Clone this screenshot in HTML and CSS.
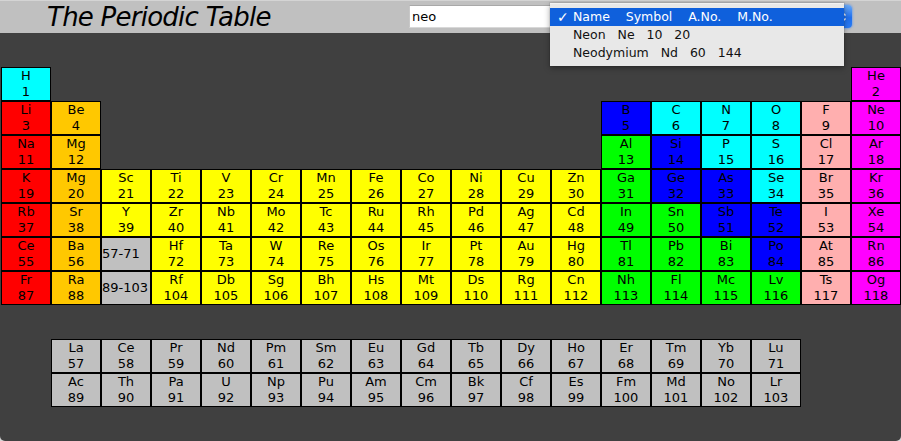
FILE: index.html
```html
<!DOCTYPE html>
<html lang="en">
<head>
<meta charset="utf-8">
<title>The Periodic Table</title>
<link rel="stylesheet" href="styles.css">
</head>
<body>
<div class="window">
  <header class="toolbar">
    <h1 class="title">The Periodic Table</h1>
    <div class="search">
      <div class="field">neo</div>
      <div class="combo">
        <span class="combo-btn">
          <svg width="8" height="12" viewBox="0 0 8 12"><path d="M1.5 4.5 L4 2 L6.5 4.5 M1.5 7.5 L4 10 L6.5 7.5" fill="none" stroke="#fff" stroke-width="1.4"/></svg>
        </span>
      </div>
    </div>
    <ul class="popup">
      <li class="opt selected"><span class="check">✓</span><span class="txt">Name    Symbol    A.No.    M.No.</span></li>
      <li class="opt"><span class="check"></span><span class="txt">Neon   Ne   10   20</span></li>
      <li class="opt"><span class="check"></span><span class="txt">Neodymium   Nd   60   144</span></li>
    </ul>
  </header>

  <main class="board">
    <div class="grid">
      <div class="el nm"><span>H</span><span>1</span></div>
      <div class="el ng col-18"><span>He</span><span>2</span></div>

      <div class="el alk"><span>Li</span><span>3</span></div>
      <div class="el ae"><span>Be</span><span>4</span></div>
      <div class="el met col-13"><span>B</span><span>5</span></div>
      <div class="el nm"><span>C</span><span>6</span></div>
      <div class="el nm"><span>N</span><span>7</span></div>
      <div class="el nm"><span>O</span><span>8</span></div>
      <div class="el hal"><span>F</span><span>9</span></div>
      <div class="el ng"><span>Ne</span><span>10</span></div>

      <div class="el alk"><span>Na</span><span>11</span></div>
      <div class="el ae"><span>Mg</span><span>12</span></div>
      <div class="el pm col-13"><span>Al</span><span>13</span></div>
      <div class="el met"><span>Si</span><span>14</span></div>
      <div class="el nm"><span>P</span><span>15</span></div>
      <div class="el nm"><span>S</span><span>16</span></div>
      <div class="el hal"><span>Cl</span><span>17</span></div>
      <div class="el ng"><span>Ar</span><span>18</span></div>

      <div class="el alk"><span>K</span><span>19</span></div>
      <div class="el ae"><span>Mg</span><span>20</span></div>
      <div class="el tm"><span>Sc</span><span>21</span></div>
      <div class="el tm"><span>Ti</span><span>22</span></div>
      <div class="el tm"><span>V</span><span>23</span></div>
      <div class="el tm"><span>Cr</span><span>24</span></div>
      <div class="el tm"><span>Mn</span><span>25</span></div>
      <div class="el tm"><span>Fe</span><span>26</span></div>
      <div class="el tm"><span>Co</span><span>27</span></div>
      <div class="el tm"><span>Ni</span><span>28</span></div>
      <div class="el tm"><span>Cu</span><span>29</span></div>
      <div class="el tm"><span>Zn</span><span>30</span></div>
      <div class="el pm"><span>Ga</span><span>31</span></div>
      <div class="el met"><span>Ge</span><span>32</span></div>
      <div class="el met"><span>As</span><span>33</span></div>
      <div class="el nm"><span>Se</span><span>34</span></div>
      <div class="el hal"><span>Br</span><span>35</span></div>
      <div class="el ng"><span>Kr</span><span>36</span></div>

      <div class="el alk"><span>Rb</span><span>37</span></div>
      <div class="el ae"><span>Sr</span><span>38</span></div>
      <div class="el tm"><span>Y</span><span>39</span></div>
      <div class="el tm"><span>Zr</span><span>40</span></div>
      <div class="el tm"><span>Nb</span><span>41</span></div>
      <div class="el tm"><span>Mo</span><span>42</span></div>
      <div class="el tm"><span>Tc</span><span>43</span></div>
      <div class="el tm"><span>Ru</span><span>44</span></div>
      <div class="el tm"><span>Rh</span><span>45</span></div>
      <div class="el tm"><span>Pd</span><span>46</span></div>
      <div class="el tm"><span>Ag</span><span>47</span></div>
      <div class="el tm"><span>Cd</span><span>48</span></div>
      <div class="el pm"><span>In</span><span>49</span></div>
      <div class="el pm"><span>Sn</span><span>50</span></div>
      <div class="el met"><span>Sb</span><span>51</span></div>
      <div class="el met"><span>Te</span><span>52</span></div>
      <div class="el hal"><span>I</span><span>53</span></div>
      <div class="el ng"><span>Xe</span><span>54</span></div>

      <div class="el alk"><span>Ce</span><span>55</span></div>
      <div class="el ae"><span>Ba</span><span>56</span></div>
      <div class="el ln range">57-71</div>
      <div class="el tm"><span>Hf</span><span>72</span></div>
      <div class="el tm"><span>Ta</span><span>73</span></div>
      <div class="el tm"><span>W</span><span>74</span></div>
      <div class="el tm"><span>Re</span><span>75</span></div>
      <div class="el tm"><span>Os</span><span>76</span></div>
      <div class="el tm"><span>Ir</span><span>77</span></div>
      <div class="el tm"><span>Pt</span><span>78</span></div>
      <div class="el tm"><span>Au</span><span>79</span></div>
      <div class="el tm"><span>Hg</span><span>80</span></div>
      <div class="el pm"><span>Tl</span><span>81</span></div>
      <div class="el pm"><span>Pb</span><span>82</span></div>
      <div class="el pm"><span>Bi</span><span>83</span></div>
      <div class="el met"><span>Po</span><span>84</span></div>
      <div class="el hal"><span>At</span><span>85</span></div>
      <div class="el ng"><span>Rn</span><span>86</span></div>

      <div class="el alk"><span>Fr</span><span>87</span></div>
      <div class="el ae"><span>Ra</span><span>88</span></div>
      <div class="el ln range">89-103</div>
      <div class="el tm"><span>Rf</span><span>104</span></div>
      <div class="el tm"><span>Db</span><span>105</span></div>
      <div class="el tm"><span>Sg</span><span>106</span></div>
      <div class="el tm"><span>Bh</span><span>107</span></div>
      <div class="el tm"><span>Hs</span><span>108</span></div>
      <div class="el tm"><span>Mt</span><span>109</span></div>
      <div class="el tm"><span>Ds</span><span>110</span></div>
      <div class="el tm"><span>Rg</span><span>111</span></div>
      <div class="el tm"><span>Cn</span><span>112</span></div>
      <div class="el pm"><span>Nh</span><span>113</span></div>
      <div class="el pm"><span>Fl</span><span>114</span></div>
      <div class="el pm"><span>Mc</span><span>115</span></div>
      <div class="el pm"><span>Lv</span><span>116</span></div>
      <div class="el hal"><span>Ts</span><span>117</span></div>
      <div class="el ng"><span>Og</span><span>118</span></div>
    </div>

    <div class="fblock">
      <div class="el ln"><span>La</span><span>57</span></div>
      <div class="el ln"><span>Ce</span><span>58</span></div>
      <div class="el ln"><span>Pr</span><span>59</span></div>
      <div class="el ln"><span>Nd</span><span>60</span></div>
      <div class="el ln"><span>Pm</span><span>61</span></div>
      <div class="el ln"><span>Sm</span><span>62</span></div>
      <div class="el ln"><span>Eu</span><span>63</span></div>
      <div class="el ln"><span>Gd</span><span>64</span></div>
      <div class="el ln"><span>Tb</span><span>65</span></div>
      <div class="el ln"><span>Dy</span><span>66</span></div>
      <div class="el ln"><span>Ho</span><span>67</span></div>
      <div class="el ln"><span>Er</span><span>68</span></div>
      <div class="el ln"><span>Tm</span><span>69</span></div>
      <div class="el ln"><span>Yb</span><span>70</span></div>
      <div class="el ln"><span>Lu</span><span>71</span></div>

      <div class="el ln"><span>Ac</span><span>89</span></div>
      <div class="el ln"><span>Th</span><span>90</span></div>
      <div class="el ln"><span>Pa</span><span>91</span></div>
      <div class="el ln"><span>U</span><span>92</span></div>
      <div class="el ln"><span>Np</span><span>93</span></div>
      <div class="el ln"><span>Pu</span><span>94</span></div>
      <div class="el ln"><span>Am</span><span>95</span></div>
      <div class="el ln"><span>Cm</span><span>96</span></div>
      <div class="el ln"><span>Bk</span><span>97</span></div>
      <div class="el ln"><span>Cf</span><span>98</span></div>
      <div class="el ln"><span>Es</span><span>99</span></div>
      <div class="el ln"><span>Fm</span><span>100</span></div>
      <div class="el ln"><span>Md</span><span>101</span></div>
      <div class="el ln"><span>No</span><span>102</span></div>
      <div class="el ln"><span>Lr</span><span>103</span></div>
    </div>
  </main>
</div>
</body>
</html>
```

FILE: styles.css
```css
* {
  box-sizing: border-box;
}

html, body {
  margin: 0;
  padding: 0;
  background: #d6d6d6;
}

body {
  font-family: "DejaVu Sans", "Liberation Sans", sans-serif;
  color: #000;
}

.window {
  width: 901px;
  height: 441px;
  display: flex;
  flex-direction: column;
  border-radius: 0 0 5px 5px;
  overflow: hidden;
}

/* ---------- toolbar ---------- */
.toolbar {
  position: relative;
  height: 33px;
  flex: none;
  background: #c0c0c0;
  border-top: 1px solid #d4d4d4;
  display: grid;
  grid-template-columns: 409px 443px;
  z-index: 2;
}

.title {
  margin: 0;
  padding-left: 47px;
  font-family: "DejaVu Sans", sans-serif;
  font-style: italic;
  font-weight: normal;
  font-size: 26px;
  letter-spacing: -0.75px;
  line-height: 32px;
  white-space: nowrap;
}

.search {
  display: flex;
  align-items: flex-start;
  padding-top: 4px;
}

.field {
  width: 300px;
  height: 23px;
  background: #fff;
  border-top: 1px solid #a8a8a8;
  border-left: 1px solid #c8c8c8;
  border-right: 1px solid #c8c8c8;
  border-bottom: 1px solid #d8d8d8;
  font-size: 13px;
  line-height: 21px;
  padding-left: 2px;
}

.combo {
  width: 143px;
  height: 23px;
  background: linear-gradient(#ffffff, #ececec);
  border: 1px solid #a9a9a9;
  border-radius: 4px;
  display: flex;
  justify-content: flex-end;
  box-shadow: 0 0 2px 1px rgba(90, 150, 240, 0.6);
}

.combo-btn {
  width: 18px;
  height: 23px;
  margin: -1px -1px 0 0;
  border-radius: 0 4px 4px 0;
  background: linear-gradient(#6aaaf8, #1f6fee 55%, #2a7cf4);
  display: flex;
  align-items: center;
  justify-content: center;
}

/* ---------- popup menu ---------- */
.popup {
  position: absolute;
  left: 550px;
  top: 2px;
  width: 294px;
  margin: 0;
  padding: 4px 0;
  list-style: none;
  background: #e8e8e8;
  border-top: 1px solid #f2f2f2;
  box-shadow: 0 2px 6px rgba(0, 0, 0, 0.35), 0 0 0 1px rgba(0, 0, 0, 0.06);
  font-size: 12.5px;
}

.opt {
  height: 18px;
  display: flex;
  align-items: center;
  line-height: 18px;
  color: #111;
}

.opt.selected {
  background: #0f60dc;
  color: #fff;
}

.check {
  width: 16px;
  margin-left: 7px;
  font-size: 14px;
  font-weight: bold;
}

.txt {
  white-space: pre;
}

/* ---------- board ---------- */
.board {
  flex: 1;
  background: #404040;
  padding: 34px 0 0 1px;
}

.grid {
  display: grid;
  grid-template-columns: repeat(18, 50px);
  grid-auto-rows: 34px;
}

.fblock {
  display: grid;
  grid-template-columns: repeat(15, 50px);
  grid-auto-rows: 34px;
  margin: 34px 0 0 50px;
}

.col-18 { grid-column-start: 18; }
.col-13 { grid-column-start: 13; }

.el {
  border: 1px solid #000;
  display: flex;
  flex-direction: column;
  align-items: center;
  justify-content: center;
  font-size: 13px;
  line-height: 16px;
  color: #000;
  white-space: nowrap;
  overflow: hidden;
}

.el.range {
  align-items: flex-start;
}

.alk { background: #ff0000; }
.ae  { background: #ffc800; }
.tm  { background: #ffff00; }
.nm  { background: #00ffff; }
.met { background: #0000ff; }
.pm  { background: #00ff00; }
.hal { background: #ffafaf; }
.ng  { background: #ff00ff; }
.ln  { background: #c0c0c0; }
```
